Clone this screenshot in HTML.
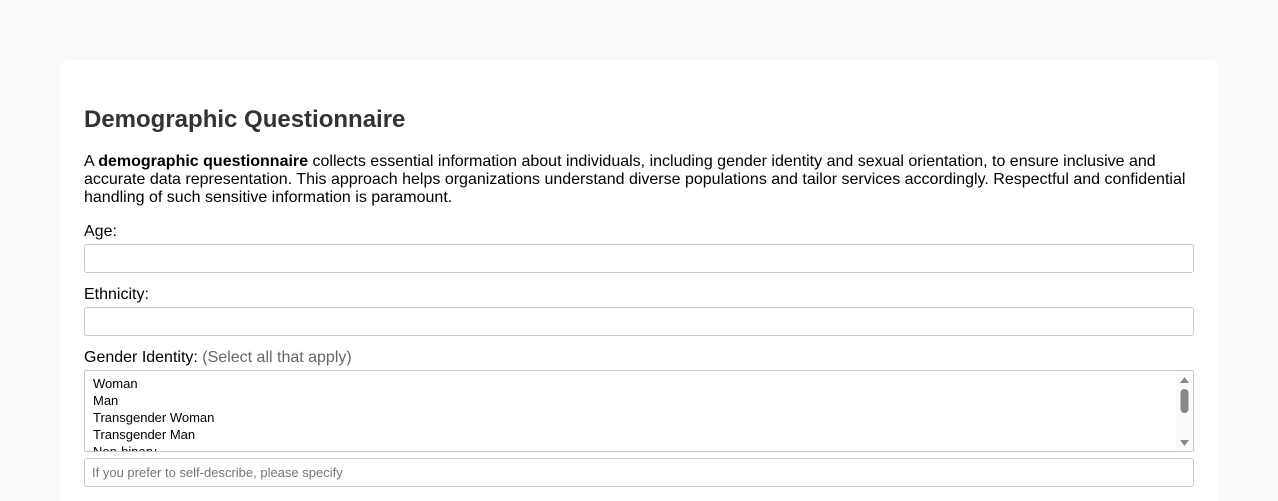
<!DOCTYPE html>
<html><head><style>
html,body{margin:0;height:501px;overflow:hidden}
body{background:#f8f9fa;font-family:"Liberation Sans",Arial,sans-serif;width:1278px;position:relative}
.card{position:absolute;left:60px;top:60px;width:1158px;height:460px;background:#fff;border-radius:8px}
h1{position:absolute;left:24px;top:46px;margin:0;font-size:24px;color:#333;font-weight:bold}
p{position:absolute;left:24px;top:93px;width:1112px;margin:0;font-size:16px;line-height:18px;color:#000}
.lbl{position:absolute;left:24px;font-size:16px;color:#000}
.inp{position:absolute;left:24px;width:1110px;height:29px;box-sizing:border-box;border:1px solid #c8c8c8;border-radius:3px;background:#fff}
.gray{color:#666}
.list{position:absolute;left:24px;top:310px;width:1110px;height:82px;box-sizing:border-box;border:1px solid #c8c8c8;border-radius:2px;overflow:hidden;font-size:13px;line-height:17px}
.list div{padding-left:8px}
.sb{position:absolute;right:0;top:0;width:17px;height:80px;background:#fafafa;padding:0!important}
.ph{font-size:13px;color:#757575;line-height:27px;padding-left:7px}
</style></head><body>
<div class="card">
<h1>Demographic Questionnaire</h1>
<p>A <b>demographic questionnaire</b> collects essential information about individuals, including gender identity and sexual orientation, to ensure inclusive and accurate data representation. This approach helps organizations understand diverse populations and tailor services accordingly. Respectful and confidential handling of such sensitive information is paramount.</p>
<div class="lbl" style="top:163px">Age:</div>
<div class="inp" style="top:184px"></div>
<div class="lbl" style="top:226px">Ethnicity:</div>
<div class="inp" style="top:247px"></div>
<div class="lbl" style="top:289px">Gender Identity: <span class="gray">(Select all that apply)</span></div>
<div class="list"><div style="margin-top:4px">Woman</div><div>Man</div><div>Transgender Woman</div><div>Transgender Man</div><div>Non-binary</div>
<div class="sb"><svg width="17" height="80"><path d="M4 12 L8.5 6 L13 12Z" fill="#888"/><rect x="4.5" y="18" width="8" height="24" rx="4" fill="#888"/><path d="M4 69 L8.5 75 L13 69Z" fill="#888"/></svg></div></div>
<div class="inp ph" style="top:398px">If you prefer to self-describe, please specify</div>
</div>
</body></html>
